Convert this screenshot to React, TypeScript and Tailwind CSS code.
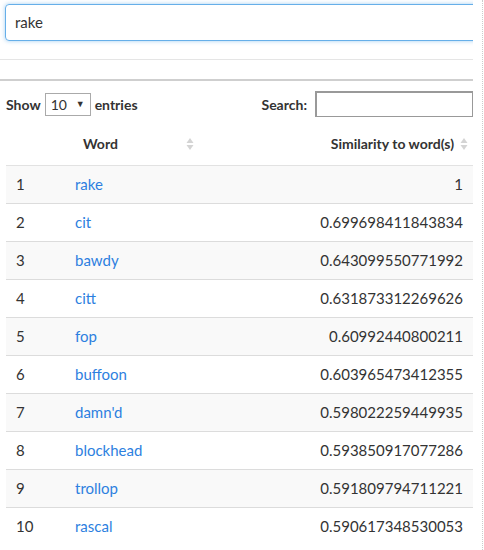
const rows: [number, string, string][] = [
  [1, 'rake', '1'],
  [2, 'cit', '0.699698411843834'],
  [3, 'bawdy', '0.643099550771992'],
  [4, 'citt', '0.631873312269626'],
  [5, 'fop', '0.60992440800211'],
  [6, 'buffoon', '0.603965473412355'],
  [7, "damn'd", '0.598022259449935'],
  [8, 'blockhead', '0.593850917077286'],
  [9, 'trollop', '0.591809794711221'],
  [10, 'rascal', '0.590617348530053'],
];

function SortIcon() {
  return (
    <svg width="8" height="14" viewBox="0 0 8 14" className="shrink-0">
      <path d="M4 1 L7.5 6 H0.5 Z" fill="#d4d4d4" />
      <path d="M4 13 L7.5 8 H0.5 Z" fill="#d4d4d4" />
    </svg>
  );
}

export default function App() {
  return (
    <div
      className="flex h-[550px] w-[484px] bg-white text-[#333]"
      style={{ fontFamily: 'Lato, "Open Sans", sans-serif' }}
    >
      <div className="w-[473px] overflow-hidden">
        {/* query box */}
        <div className="pl-[5px] pt-[4px]">
          <div className="flex h-[37px] w-[480px] items-center rounded-[4px] border border-[#66afe9] px-[9px] text-[15px] shadow-[0_0_4px_rgba(102,175,233,0.6)]">
            rake
          </div>
        </div>
        <div className="mt-[18px] border-t border-[#e5e5e5]" />
        <div className="mt-[19px] border-t-2 border-[#cfcfcf]" />

        {/* controls */}
        <div className="mt-[10px] flex items-center justify-between pl-[6px] text-[14px] font-bold">
          <div className="flex items-center gap-[4px]">
            <span>Show</span>
            <div className="flex h-[23px] w-[46px] items-center justify-between border border-[#aaa] px-[5px] font-normal">
              <span>10</span>
              <span className="text-[9px]">▼</span>
            </div>
            <span>entries</span>
          </div>
          <div className="flex items-center gap-[8px]">
            <span>Search:</span>
            <div className="h-[26px] w-[158px] border border-[#999] border-t-2 border-l-2" />
          </div>
        </div>

        {/* table */}
        <table className="mt-[6px] ml-[6px] w-[467px] table-fixed border-collapse text-[15px]">
          <colgroup>
            <col className="w-[56px]" />
            <col className="w-[138px]" />
            <col />
          </colgroup>
          <thead>
            <tr className="h-[42px] border-b border-[#e2e2e2] text-[14px] font-bold">
              <th />
              <th className="pl-[21px] pr-[6px] text-left">
                <div className="flex items-center justify-between">
                  <span>Word</span>
                  <SortIcon />
                </div>
              </th>
              <th className="pr-[5px] text-right">
                <div className="flex items-center justify-end gap-[6px]">
                  <span>Similarity to word(s)</span>
                  <SortIcon />
                </div>
              </th>
            </tr>
          </thead>
          <tbody>
            {rows.map(([n, w, s]) => (
              <tr
                key={n}
                className={`h-[38px] border-b border-[#dcdcdc] last:border-b-0 ${n % 2 === 1 ? 'bg-[#f9f9f9]' : 'bg-white'}`}
              >
                <td className="pl-[10px]">{n}</td>
                <td className="pl-[13px] text-[#2d7fe0]">{w}</td>
                <td className="pr-[10px] text-right">{s}</td>
              </tr>
            ))}
          </tbody>
        </table>
      </div>
      <div className="ml-[9px] w-px border-l border-dotted border-[#ccc]" />
    </div>
  );
}
